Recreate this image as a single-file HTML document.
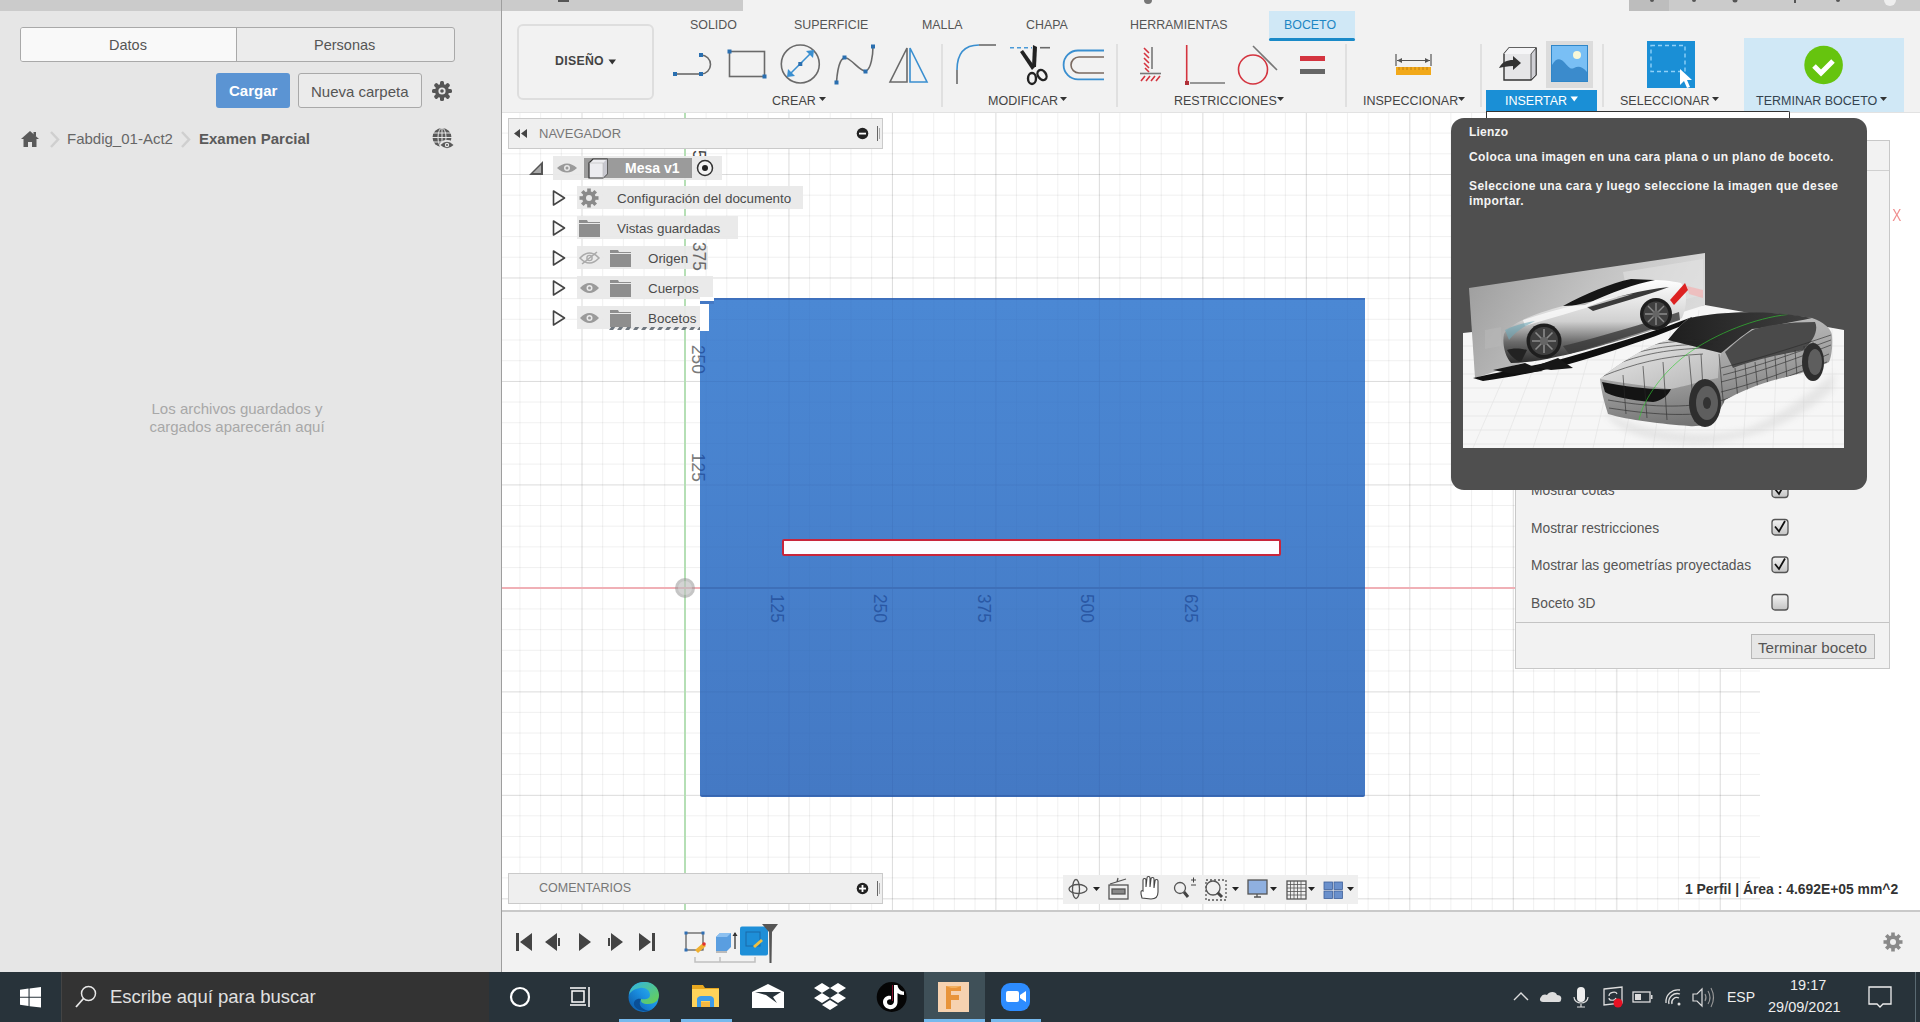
<!DOCTYPE html>
<html><head><meta charset="utf-8">
<style>
*{margin:0;padding:0;box-sizing:border-box}
html,body{width:1920px;height:1022px;overflow:hidden;background:#fff;font-family:"Liberation Sans",sans-serif}
.a{position:absolute}
.t{position:absolute;white-space:nowrap;line-height:1}
.tab{position:absolute;top:18px;font-size:13px;color:#555;white-space:nowrap;line-height:1}
.lbl{position:absolute;top:95px;font-size:12.5px;color:#444;white-space:nowrap;line-height:1}
.nv{position:absolute;font-size:13.4px;color:#4a4a4a;white-space:nowrap;line-height:1}
.rowbg{position:absolute;height:24px;background:rgba(232,232,232,0.93)}
svg{position:absolute;overflow:visible}
</style></head><body>
<!-- left panel -->
<div class="a" style="left:0;top:0;width:502px;height:972px;background:#e6e6e6"></div>
<div class="a" style="left:502px;top:0;width:1418px;height:11px;background:#f2f2f2"></div>
<div class="a" style="left:0;top:0;width:743px;height:11px;background:#cbcbcb"></div>
<div class="a" style="left:1629px;top:0;width:291px;height:11px;background:#cbcbcb"></div>
<div class="a" style="left:1629px;top:0;width:40px;height:11px;background:#bdbdbd"></div>
<svg style="left:0;top:0" width="1920" height="12">
 <g fill="#555"><rect x="558" y="0" width="11" height="2"/><circle cx="1652" cy="0" r="2"/><circle cx="1694" cy="0" r="2"/><circle cx="1735" cy="0" r="2.5"/><rect x="1794" y="0" width="2" height="3"/><circle cx="1838" cy="0" r="2"/></g>
 <circle cx="1890" cy="0" r="6" fill="#eee"/>
</svg>
<div class="a" style="left:501px;top:0;width:1px;height:972px;background:#9e9e9e"></div>

<div class="a" style="left:20px;top:27px;width:435px;height:35px;border:1px solid #a9a9a9;border-radius:3px;background:#ececec;overflow:hidden">
  <div class="a" style="left:0;top:0;width:216px;height:33px;background:#f9f9f9;border-right:1px solid #a9a9a9"></div>
</div>
<div class="t" style="left:109px;top:38px;font-size:14.5px;color:#555">Datos</div>
<div class="t" style="left:314px;top:38px;font-size:14.5px;color:#555">Personas</div>

<div class="a" style="left:216px;top:73px;width:74px;height:35px;background:#5b94d3;border-radius:3px"></div>
<div class="t" style="left:229px;top:83px;font-size:15px;font-weight:bold;color:#fff">Cargar</div>
<div class="a" style="left:298px;top:73px;width:124px;height:35px;border:1px solid #a9a9a9;border-radius:3px;background:#ebebeb"></div>
<div class="t" style="left:311px;top:84px;font-size:15px;color:#555">Nueva carpeta</div>
<!-- gear -->
<svg style="left:432px;top:81px" width="20" height="20" viewBox="0 0 20 20">
 <g fill="#555" transform="translate(10,10)">
  <circle r="7"/>
  <rect x="-2" y="-10" width="4" height="20" rx="1.5"/>
  <rect x="-2" y="-10" width="4" height="20" rx="1.5" transform="rotate(45)"/>
  <rect x="-2" y="-10" width="4" height="20" rx="1.5" transform="rotate(90)"/>
  <rect x="-2" y="-10" width="4" height="20" rx="1.5" transform="rotate(135)"/>
 </g>
 <circle cx="10" cy="10" r="3.6" fill="#e6e6e6"/>
 <circle cx="10" cy="10" r="1.8" fill="#555"/>
</svg>
<!-- breadcrumb -->
<svg style="left:21px;top:130px" width="18" height="18" viewBox="0 0 18 18">
 <path d="M9 1 L0 9 L2.5 9 L2.5 17 L7 17 L7 12 L11 12 L11 17 L15.5 17 L15.5 9 L18 9 Z" fill="#5a5a5a"/>
 <rect x="12.5" y="2" width="2.5" height="4" fill="#5a5a5a"/>
</svg>
<svg style="left:49px;top:131px" width="12" height="17" viewBox="0 0 12 17"><path d="M2 1 L9 8.5 L2 16" stroke="#cfcfcf" stroke-width="2.5" fill="none"/></svg>
<div class="t" style="left:67px;top:131px;font-size:15px;color:#666">Fabdig_01-Act2</div>
<svg style="left:180px;top:131px" width="12" height="17" viewBox="0 0 12 17"><path d="M2 1 L9 8.5 L2 16" stroke="#cfcfcf" stroke-width="2.5" fill="none"/></svg>
<div class="t" style="left:199px;top:131px;font-size:15px;font-weight:bold;color:#5a5a5a">Examen Parcial</div>
<!-- globe -->
<svg style="left:432px;top:128px" width="22" height="22" viewBox="0 0 22 22">
 <circle cx="10" cy="9.5" r="9.5" fill="#5a5a5a"/>
 <g stroke="#e6e6e6" stroke-width="1" fill="none">
  <line x1="0" y1="5" x2="20" y2="5"/><line x1="0" y1="9.5" x2="20" y2="9.5"/><line x1="0" y1="14" x2="20" y2="14"/>
  <ellipse cx="10" cy="9.5" rx="4" ry="9.5"/><line x1="10" y1="0" x2="10" y2="19"/>
 </g>
 <ellipse cx="15" cy="17" rx="7.5" ry="5" fill="#e6e6e6"/>
 <path d="M8.5 17 Q15 10.5 21.5 17 Q15 23.5 8.5 17 Z" fill="#5a5a5a"/>
 <circle cx="15" cy="17" r="2.2" fill="#e6e6e6"/><circle cx="15" cy="17" r="1" fill="#5a5a5a"/>
</svg>
<div class="t" style="left:0;top:400px;width:474px;text-align:center;font-size:15px;color:#a8a8a8;line-height:17.7px">Los archivos guardados y<br>cargados aparecerán aquí</div>
<!-- ribbon -->
<div class="a" style="left:502px;top:11px;width:1418px;height:101px;background:#f2f2f2"></div>
<div class="a" style="left:502px;top:112px;width:1418px;height:1px;background:#e2e2e2"></div>
<div class="a" style="left:1144px;top:0;width:8px;height:4px;background:#777;border-radius:0 0 4px 4px"></div>
<!-- tabs -->
<div class="a" style="left:1269px;top:11px;width:86px;height:30px;background:#d0e8f6"></div>
<div class="a" style="left:1269px;top:38px;width:86px;height:3px;background:#1a8ac8;border-radius:2px"></div>
<div class="tab" style="left:690px;top:19px;font-size:12.4px">SOLIDO</div>
<div class="tab" style="left:794px;top:19px;font-size:12.4px">SUPERFICIE</div>
<div class="tab" style="left:922px;top:19px;font-size:12.4px">MALLA</div>
<div class="tab" style="left:1026px;top:19px;font-size:12.4px">CHAPA</div>
<div class="tab" style="left:1130px;top:19px;font-size:12.4px">HERRAMIENTAS</div>
<div class="tab" style="left:1284px;top:19px;font-size:12.4px;color:#1d86c4">BOCETO</div>
<!-- diseño -->
<div class="a" style="left:517px;top:24px;width:137px;height:76px;border:2px solid #dedede;border-radius:6px"></div>
<div class="t" style="left:555px;top:55px;font-size:12.3px;font-weight:bold;color:#444;letter-spacing:0.3px">DISEÑO</div>
<svg style="left:608px;top:59px" width="9" height="6"><path d="M0.5 0.5 L8 0.5 L4.25 5.5 Z" fill="#333"/></svg>
<!-- separators -->
<div class="a" style="left:941px;top:44px;width:2px;height:63px;background:#e0e0e0"></div>
<div class="a" style="left:1116px;top:44px;width:2px;height:63px;background:#e0e0e0"></div>
<div class="a" style="left:1345px;top:44px;width:2px;height:63px;background:#e0e0e0"></div>
<div class="a" style="left:1480px;top:44px;width:2px;height:63px;background:#e0e0e0"></div>
<div class="a" style="left:1602px;top:44px;width:2px;height:63px;background:#e0e0e0"></div>
<!-- CREAR icons -->
<svg style="left:0;top:0" width="1920" height="113">
 <g fill="none" stroke="#6a6a6a" stroke-width="1.6">
  <line x1="675" y1="74" x2="701" y2="74"/>
  <path d="M701 55 A9.5 9.5 0 0 1 701 74"/>
  <rect x="729.5" y="51.5" width="35" height="25"/>
  <circle cx="800.3" cy="64" r="19"/>
  <path d="M836.5 82 C838 62 842 57 846 58 C852 59 860 72 866 71 C871 69 873 55 873 46"/>
  <path d="M907 48 L890 82 L907 82 Z"/>
 </g>
 <g fill="none" stroke="#3a8fd0" stroke-width="1.6">
  <path d="M910 48 L927 82 L910 82 Z"/>
  <line x1="789" y1="75" x2="812" y2="52"/>
 </g>
 <g fill="#3a8fd0"><path d="M787 77 L788 69 L795 76 Z"/><path d="M814 50 L813 58 L806 51 Z"/></g>
 <g fill="#2a6fb0">
  <rect x="673" y="72" width="4" height="4"/><rect x="699" y="72" width="4" height="4"/><rect x="699" y="53" width="4" height="4"/>
  <rect x="727.5" y="49.5" width="4" height="4"/><rect x="762.5" y="74.5" width="4" height="4"/>
  <rect x="798.3" y="62" width="4" height="4"/>
  <rect x="834.5" y="80.5" width="4" height="4"/><rect x="842.5" y="55.5" width="4" height="4"/><rect x="863.5" y="69.5" width="4" height="4"/><rect x="871" y="44.5" width="4" height="4"/>
 </g>
 <!-- MODIFICAR -->
 <path d="M957 84 L957 70" stroke="#6a6a6a" stroke-width="1.6" fill="none"/>
 <path d="M957 70 Q957 45 979 45" stroke="#3a8fd0" stroke-width="1.6" fill="none"/>
 <path d="M979 45 L996 45" stroke="#6a6a6a" stroke-width="1.6" fill="none"/>
 <path d="M1010 47.7 L1032 47.7" stroke="#4a9ad8" stroke-width="1.6" stroke-dasharray="4,3" fill="none"/>
 <path d="M1040 47.7 L1050 47.7" stroke="#6a6a6a" stroke-width="1.6" fill="none"/>
 <g fill="#222">
  <path d="M1020 52 L1023 50 L1035 67 L1032 70 Z"/>
  <path d="M1033 45 L1037 47 L1036 67 L1032 67 Z"/>
 </g>
 <g fill="none" stroke="#222" stroke-width="2.4">
  <ellipse cx="1032" cy="78.5" rx="4" ry="5.5"/>
  <ellipse cx="1042" cy="75" rx="4" ry="5.5" transform="rotate(-35 1042 75)"/>
 </g>
 <path d="M1104 50.5 L1078 50.5 A14.4 14.4 0 0 0 1078 79.3 L1104 79.3" stroke="#3a8fd0" stroke-width="1.8" fill="none"/>
 <path d="M1104 57 L1079 57 A8 8 0 0 0 1079 73 L1104 73" stroke="#7a6a60" stroke-width="1.6" fill="none"/>
 <!-- RESTRICCIONES -->
 <g stroke="#d4343f" stroke-width="1.6" fill="none">
  <path d="M1144 48 L1149 53 M1144 53 L1149 58 M1144 58 L1149 63 M1144 63 L1149 68 M1145 68 L1149 72"/>
  <path d="M1141 81 L1145 76 M1146 81 L1150 76 M1151 81 L1155 76 M1156 81 L1160 76"/>
  <line x1="1186.7" y1="45" x2="1186.7" y2="83"/>
  <circle cx="1253" cy="69.5" r="14.5"/>
 </g>
 <g stroke="#777" stroke-width="1.6" fill="none">
  <line x1="1152" y1="47" x2="1152" y2="69"/>
  <line x1="1140" y1="73.5" x2="1161" y2="73.5"/>
  <line x1="1190" y1="83" x2="1225" y2="83"/>
  <line x1="1253" y1="46" x2="1277" y2="70"/>
 </g>
 <rect x="1185" y="81" width="4" height="4" fill="#b03038"/>
 <rect x="1300" y="56" width="25" height="5" fill="#d4343f"/>
 <rect x="1300" y="69" width="25" height="5" fill="#666"/>
 <!-- INSPECCIONAR -->
 <g stroke="#555" stroke-width="1.2" fill="none">
  <line x1="1396" y1="54" x2="1396" y2="66"/><line x1="1431" y1="54" x2="1431" y2="66"/>
  <line x1="1397" y1="60.5" x2="1430" y2="60.5"/>
 </g>
 <path d="M1397 60.5 L1402 58 L1402 63 Z M1430 60.5 L1425 58 L1425 63 Z" fill="#555"/>
 <rect x="1396" y="67" width="35" height="8" fill="#f2a91a"/>
 <g stroke="#b57a10" stroke-width="0.8"><path d="M1399 67 v3 M1403 67 v3 M1407 67 v3 M1411 67 v3 M1415 67 v3 M1419 67 v3 M1423 67 v3 M1427 67 v3"/></g>
</svg>
<!-- INSERTAR -->
<svg style="left:1498px;top:46px" width="40" height="36" viewBox="0 0 40 36">
 <path d="M6 8 L11 2 L38 2 L38 29 L33 34 L6 34 Z" fill="#e6e6e8" stroke="#333" stroke-width="1.4"/>
 <path d="M11 2 L38 2 L33 8 L6 8 Z" fill="#f5f5f7"/>
 <path d="M33 8 L38 2 L38 29 L33 34 Z" fill="#cfcfd4" stroke="#333" stroke-width="0.8"/>
 <path d="M1 22 C4 16 9 14 15 14 L15 10 L23 17 L15 24 L15 20 C10 20 5 21 1 22 Z" fill="#333"/>
</svg>
<div class="a" style="left:1546px;top:41px;width:47px;height:47px;background:#dcdcdc"></div>
<svg style="left:1551px;top:45px" width="37" height="37" viewBox="0 0 37 37">
 <rect x="0" y="0" width="37" height="37" fill="#2f86c8"/>
 <rect x="1" y="1" width="35" height="35" fill="#79bff5"/>
 <circle cx="26" cy="10" r="4" fill="#f8f8d8"/>
 <path d="M1 36 L1 20 C5 13 9 13 13 17 C17 21 19 25 23 23 C27 21 31 21 36 27 L36 36 Z" fill="#3b8bcc"/>
</svg>
<div class="a" style="left:1486px;top:90px;width:111px;height:21px;background:#1a8fd6"></div>
<div class="lbl" style="left:1505px;color:#fff">INSERTAR</div>
<svg style="left:1570px;top:96px" width="9" height="6"><path d="M0.5 0.5 L8 0.5 L4.25 5.5 Z" fill="#fff"/></svg>
<!-- SELECCIONAR -->
<div class="a" style="left:1647px;top:41px;width:48px;height:47px;background:#1a8fd6"></div>
<svg style="left:1647px;top:41px" width="48" height="47">
 <rect x="4" y="4.5" width="34" height="26" fill="none" stroke="#8fd0f8" stroke-width="1.4" stroke-dasharray="4,3"/>
 <path d="M33 28 L33 44 L37 40 L40 47 L43 46 L40 39 L45 39 Z" fill="#fff"/>
</svg>
<!-- TERMINAR -->
<div class="a" style="left:1744px;top:38px;width:160px;height:74px;background:#d0e8f6"></div>
<svg style="left:1804px;top:45px" width="40" height="40">
 <circle cx="19.6" cy="20" r="19.3" fill="#66c40e"/>
 <path d="M10 21 L17 28 L29 16" stroke="#fff" stroke-width="5" fill="none"/>
</svg>
<!-- ribbon labels -->
<div class="lbl" style="left:772px">CREAR</div>
<div class="lbl" style="left:988px">MODIFICAR</div>
<div class="lbl" style="left:1174px">RESTRICCIONES</div>
<div class="lbl" style="left:1363px">INSPECCIONAR</div>
<div class="lbl" style="left:1620px">SELECCIONAR</div>
<div class="lbl" style="left:1756px;color:#33434f">TERMINAR BOCETO</div>
<svg style="left:0;top:96px" width="1920" height="8">
 <path d="M819 1 L826 1 L822.5 5 Z M1060 1 L1067 1 L1063.5 5 Z M1277 1 L1284 1 L1280.5 5 Z M1458 1 L1465 1 L1461.5 5 Z M1712 1 L1719 1 L1715.5 5 Z M1880 1 L1887 1 L1883.5 5 Z" fill="#333"/>
</svg>
<!-- viewport -->
<div class="a" style="left:502px;top:113px;width:1418px;height:797px;background:#fff"></div>
<div class="a" style="left:502px;top:113px;width:1258px;height:797px;
background-image:
linear-gradient(to right, rgba(0,0,0,0.085) 1px, transparent 1px),
linear-gradient(to bottom, rgba(0,0,0,0.085) 1px, transparent 1px),
linear-gradient(to right, rgba(0,0,0,0.06) 1px, transparent 1px),
linear-gradient(to bottom, rgba(0,0,0,0.06) 1px, transparent 1px);
background-size:103.5px 103.5px,103.5px 103.5px,20.7px 20.7px,20.7px 20.7px;
background-position:79.5px 61px,79.5px 61px,79.5px 61px,79.5px 61px"></div>
<!-- axes -->
<div class="a" style="left:684px;top:113px;width:2px;height:797px;background:#b5dfb5"></div>
<!-- blue rect -->
<div class="a" style="left:700px;top:298px;width:665px;height:499px;background:linear-gradient(#4b88d4,#4479c4);border-top:2px solid #3f72bf;border-bottom:2px solid #3a6bb6;border-radius:0 0 2px 2px"></div>
<div class="a" style="left:700px;top:298px;width:665px;height:499px;opacity:0.12;
background-image:
linear-gradient(to right, rgba(0,0,60,0.35) 1px, transparent 1px),
linear-gradient(to bottom, rgba(0,0,60,0.35) 1px, transparent 1px),
linear-gradient(to right, rgba(0,0,60,0.15) 1px, transparent 1px),
linear-gradient(to bottom, rgba(0,0,60,0.15) 1px, transparent 1px);
background-size:103.5px 103.5px,103.5px 103.5px,20.7px 20.7px,20.7px 20.7px;
background-position:-15px 83px,-15px 83px,-15px 83px,-15px 83px"></div>
<div class="a" style="left:502px;top:587px;width:198px;height:2px;background:#f0b0b6"></div>
<div class="a" style="left:700px;top:587px;width:665px;height:2px;background:#3e6fb8"></div>
<div class="a" style="left:1365px;top:587px;width:151px;height:2px;background:#f0b0b6"></div>
<!-- origin -->
<svg style="left:673px;top:576px" width="24" height="24"><circle cx="12" cy="12" r="10" fill="rgba(150,150,150,0.55)"/><circle cx="12" cy="12" r="7" fill="rgba(255,255,255,0.25)"/></svg>
<!-- red bar -->
<div class="a" style="left:782px;top:539px;width:499px;height:17px;background:#fdfdff;border:2px solid #c8263c;border-radius:2px"></div>
<!-- axis numbers -->
<div class="t" style="left:786px;top:594px;font-size:18px;color:#2a58a4;transform-origin:0 0;transform:rotate(90deg) scaleX(0.96)">125</div>
<div class="t" style="left:889px;top:594px;font-size:18px;color:#2a58a4;transform-origin:0 0;transform:rotate(90deg) scaleX(0.96)">250</div>
<div class="t" style="left:993px;top:594px;font-size:18px;color:#2a58a4;transform-origin:0 0;transform:rotate(90deg) scaleX(0.96)">375</div>
<div class="t" style="left:1096px;top:594px;font-size:18px;color:#2a58a4;transform-origin:0 0;transform:rotate(90deg) scaleX(0.96)">500</div>
<div class="t" style="left:1200px;top:594px;font-size:18px;color:#2a58a4;transform-origin:0 0;transform:rotate(90deg) scaleX(0.96)">625</div>
<div class="a" style="left:680px;top:340px;width:20px;height:145px;overflow:hidden">
<div class="t" style="left:27px;top:5px;font-size:18px;color:#7a7a7a;transform-origin:0 0;transform:rotate(90deg) scaleX(0.96)">250</div>
<div class="t" style="left:27px;top:113px;font-size:18px;color:#7a7a7a;transform-origin:0 0;transform:rotate(90deg) scaleX(0.96)">125</div>
</div>
<div class="a" style="left:700px;top:340px;width:20px;height:145px;overflow:hidden">
<div class="t" style="left:7px;top:5px;font-size:18px;color:#2a58a4;transform-origin:0 0;transform:rotate(90deg) scaleX(0.96)">250</div>
<div class="t" style="left:7px;top:113px;font-size:18px;color:#2a58a4;transform-origin:0 0;transform:rotate(90deg) scaleX(0.96)">125</div>
</div>
<!-- navigator -->
<div class="a" style="left:508px;top:118px;width:375px;height:31px;background:#efefef;border:1px solid #cacaca"></div>
<svg style="left:514px;top:129px" width="14" height="9"><path d="M6 0 L0 4.5 L6 9 Z M13 0 L7 4.5 L13 9 Z" fill="#444"/></svg>
<div class="t" style="left:539px;top:127px;font-size:13px;color:#777">NAVEGADOR</div>
<svg style="left:856px;top:127px" width="13" height="13"><circle cx="6.5" cy="6.5" r="5.8" fill="#222"/><rect x="3" y="5.7" width="7" height="1.8" fill="#fff"/></svg>
<div class="a" style="left:877px;top:126px;width:1px;height:15px;background:#666"></div>
<div class="a" style="left:879px;top:128px;width:1px;height:11px;background:#aaa"></div>
<!-- tree -->
<div class="rowbg" style="left:553px;top:156px;width:169px;height:24px"></div>
<svg style="left:528px;top:160px" width="16" height="16"><path d="M15 1 L15 15 L1 15 Z" fill="#555"/><path d="M13 5 L13 13 L5 13 Z" fill="#aaa"/></svg>
<svg style="left:557px;top:162px" width="20" height="12"><path d="M0 6 Q10 -3 20 6 Q10 15 0 6 Z" fill="#9a9a9a"/><circle cx="10" cy="6" r="3" fill="#e8e8e8"/><circle cx="10" cy="6" r="1.5" fill="#9a9a9a"/></svg>
<div class="a" style="left:584px;top:158px;width:108px;height:20px;background:#9b9b9b"></div>
<svg style="left:587px;top:158px" width="22" height="21"><path d="M2 5 L6 1 L20 1 L20 16 L16 20 L2 20 Z" fill="#ececf0" stroke="#333" stroke-width="1.2"/><path d="M16 5 L20 1 L20 16 L16 20 Z" fill="#c8c8d0"/><path d="M2 5 L16 5 L16 20" fill="none" stroke="#bbb" stroke-width="0.6"/></svg>
<div class="t" style="left:625px;top:161px;font-size:14px;font-weight:bold;color:#fff">Mesa v1</div>
<svg style="left:696px;top:159px" width="18" height="18"><circle cx="9" cy="9" r="7.5" fill="#f4f4f4" stroke="#333" stroke-width="1.5"/><circle cx="9" cy="9" r="3" fill="#222"/></svg>
<div class="a" style="left:686px;top:140px;width:24px;height:16px;overflow:hidden"><div class="t" style="left:22px;top:10px;font-size:18px;color:#444;transform-origin:0 0;transform:rotate(90deg) scaleX(0.96)">5</div></div>

<div class="rowbg" style="left:577px;top:186px;width:226px;height:23px"></div>
<div class="rowbg" style="left:577px;top:216px;width:161px;height:23px"></div>
<div class="rowbg" style="left:577px;top:246px;width:131px;height:23px"></div>
<div class="rowbg" style="left:577px;top:276px;width:136px;height:23px"></div>
<div class="rowbg" style="left:577px;top:306px;width:131px;height:23px"></div>
<svg style="left:552px;top:190px" width="14" height="140">
 <g fill="#fafafa" stroke="#444" stroke-width="1.6" stroke-linejoin="round">
  <path d="M1.5 1 L12.5 8 L1.5 15 Z"/>
  <path d="M1.5 31 L12.5 38 L1.5 45 Z"/>
  <path d="M1.5 61 L12.5 68 L1.5 75 Z"/>
  <path d="M1.5 91 L12.5 98 L1.5 105 Z"/>
  <path d="M1.5 121 L12.5 128 L1.5 135 Z"/>
 </g>
</svg>
<!-- config gear -->
<svg style="left:579px;top:188px" width="20" height="20" viewBox="0 0 20 20">
 <g fill="#8a8a8a" transform="translate(10,10)">
  <circle r="6.8"/>
  <rect x="-1.8" y="-9.5" width="3.6" height="19"/>
  <rect x="-1.8" y="-9.5" width="3.6" height="19" transform="rotate(45)"/>
  <rect x="-1.8" y="-9.5" width="3.6" height="19" transform="rotate(90)"/>
  <rect x="-1.8" y="-9.5" width="3.6" height="19" transform="rotate(135)"/>
 </g>
 <circle cx="10" cy="10" r="3" fill="#e9e9e9"/>
</svg>
<div class="nv" style="left:617px;top:192px">Configuración del documento</div>
<svg style="left:579px;top:220px" width="21" height="17"><path d="M0 0 L8 0 L9 2 L21 2 L21 17 L0 17 Z" fill="#8e8e8e"/><rect x="0" y="3" width="21" height="1" fill="#e9e9e9"/></svg>
<div class="nv" style="left:617px;top:222px">Vistas guardadas</div>
<!-- origen -->
<svg style="left:579px;top:251px" width="21" height="14"><path d="M1 7 Q10.5 -3 20 7 Q10.5 17 1 7 Z" fill="none" stroke="#aaa" stroke-width="1.5"/><circle cx="10.5" cy="7" r="2.6" fill="none" stroke="#aaa" stroke-width="1.4"/><line x1="3" y1="13" x2="18" y2="1" stroke="#aaa" stroke-width="1.5"/></svg>
<svg style="left:610px;top:250px" width="21" height="17"><path d="M0 0 L8 0 L9 2 L21 2 L21 17 L0 17 Z" fill="#8e8e8e"/><rect x="0" y="3" width="21" height="1" fill="#e9e9e9"/></svg>
<div class="nv" style="left:648px;top:252px">Origen</div>
<div class="t" style="left:708px;top:242px;font-size:18px;color:#6a6a6a;transform-origin:0 0;transform:rotate(90deg) scaleX(0.96)">375</div>
<!-- cuerpos -->
<svg style="left:579px;top:281px" width="21" height="14"><path d="M1 7 Q10.5 -3 20 7 Q10.5 17 1 7 Z" fill="#9a9a9a"/><circle cx="10.5" cy="7" r="3" fill="#e9e9e9"/><circle cx="10.5" cy="7" r="1.5" fill="#9a9a9a"/></svg>
<svg style="left:610px;top:280px" width="21" height="17"><path d="M0 0 L8 0 L9 2 L21 2 L21 17 L0 17 Z" fill="#8e8e8e"/><rect x="0" y="3" width="21" height="1" fill="#e9e9e9"/></svg>
<div class="nv" style="left:648px;top:282px">Cuerpos</div>
<!-- bocetos -->
<svg style="left:579px;top:311px" width="21" height="14"><path d="M1 7 Q10.5 -3 20 7 Q10.5 17 1 7 Z" fill="#9a9a9a"/><circle cx="10.5" cy="7" r="3" fill="#e9e9e9"/><circle cx="10.5" cy="7" r="1.5" fill="#9a9a9a"/></svg>
<svg style="left:610px;top:310px" width="21" height="17"><path d="M0 0 L8 0 L9 2 L21 2 L21 17 L0 17 Z" fill="#8e8e8e"/><rect x="0" y="3" width="21" height="1" fill="#e9e9e9"/></svg>
<div class="nv" style="left:648px;top:312px">Bocetos</div>
<svg style="left:608px;top:323px" width="102" height="8"><path d="M6 5.5 L102 5.5" stroke="#707880" stroke-width="3" stroke-dasharray="4,4" transform="skewX(-35)"/></svg>
<!-- white notch on blue rect corner -->
<div class="a" style="left:700px;top:297px;width:14px;height:4px;background:#fff"></div>
<div class="a" style="left:700px;top:301px;width:14px;height:3px;background:#4479c4"></div>
<div class="a" style="left:700px;top:304px;width:9px;height:27px;background:#fff"></div>
<!-- comments -->
<div class="a" style="left:508px;top:873px;width:375px;height:31px;background:#efefef;border:1px solid #cacaca"></div>
<div class="t" style="left:539px;top:882px;font-size:12.5px;color:#777">COMENTARIOS</div>
<svg style="left:856px;top:882px" width="13" height="13"><circle cx="6.5" cy="6.5" r="5.8" fill="#222"/><rect x="3" y="5.7" width="7" height="1.8" fill="#fff"/><rect x="5.6" y="3" width="1.8" height="7" fill="#fff"/></svg>
<div class="a" style="left:877px;top:881px;width:1px;height:15px;background:#666"></div>
<div class="a" style="left:879px;top:883px;width:1px;height:11px;background:#aaa"></div>

<!-- nav toolbar -->
<div class="a" style="left:1063px;top:875px;width:295px;height:29px;background:#efefef"></div>
<svg style="left:0;top:870px" width="1920" height="40">
 <g fill="none" stroke="#555" stroke-width="1.3">
  <ellipse cx="1078" cy="19" rx="9" ry="4.5"/>
  <ellipse cx="1076" cy="19" rx="3.5" ry="9.5"/>
  <rect x="1109" y="15" width="19" height="14"/>
  <rect x="1112" y="19" width="13" height="5" fill="#888"/>
  <path d="M1110 14 L1126 9 M1117 12 L1118 8"/>
  <circle cx="1180" cy="18" r="5.5"/>
  <circle cx="1213" cy="18" r="7"/>
  <rect x="1206" y="10" width="20" height="20" stroke-dasharray="2,2"/>
  <rect x="1248" y="10" width="19" height="14" fill="#8fb0e0"/>
  <path d="M1254 27 L1261 27 M1257 24 L1257 27"/>
  <rect x="1287" y="11" width="19" height="18"/>
  <path d="M1287 14.5 H1306 M1287 18 H1306 M1287 21.5 H1306 M1287 25 H1306 M1290.5 11 V29 M1294 11 V29 M1297.5 11 V29 M1301 11 V29" stroke-width="0.8"/>
 </g>
 <path d="M1142 28 C1140 22 1141 20 1143 21 L1143 10 C1143 8 1146 8 1146 10 L1146 17 L1147 8 C1147 6 1150 6 1150 8 L1150 17 L1151 9 C1151 7 1154 7 1154 9 L1154 18 L1155 11 C1155 9 1158 9 1158 11 L1158 22 C1158 27 1155 29 1151 29 Z" fill="#fff" stroke="#444" stroke-width="1.1"/>
 <path d="M1184 22 L1188 27 M1217.5 22.5 L1222 27" stroke="#444" stroke-width="3"/>
 <path d="M1191 10 h5 M1193.5 7.5 v5 M1191 15 h5" stroke="#444" stroke-width="1"/>
 <g fill="#6a90cc" stroke="#3e5f9a" stroke-width="0.8"><rect x="1324" y="12" width="8.5" height="7.5"/><rect x="1334" y="12" width="8.5" height="7.5"/><rect x="1324" y="21" width="8.5" height="7.5"/><rect x="1334" y="21" width="8.5" height="7.5"/></g>
 <path d="M1093 17 h7 l-3.5 4 z M1232 17 h7 l-3.5 4 z M1270 17 h7 l-3.5 4 z M1308 17 h7 l-3.5 4 z M1347 17 h7 l-3.5 4 z" fill="#222"/>
</svg>
<div class="t" style="left:1685px;top:883px;font-size:13.9px;font-weight:bold;color:#333">1 Perfil | Área : 4.692E+05 mm^2</div>
<!-- right panel -->
<div class="a" style="left:1515px;top:140px;width:375px;height:529px;background:#f2f2f2;border:1px solid #c8c8c8"></div>
<div class="a" style="left:1516px;top:170px;width:373px;height:1px;background:#d0d0d0"></div>
<div class="t" style="left:1891px;top:207px;font-size:17px;color:#f09090;transform:scaleX(0.8)">X</div>
<div class="t" style="left:1531px;top:484px;font-size:13.8px;color:#555">Mostrar cotas</div>
<div class="t" style="left:1531px;top:522px;font-size:13.8px;color:#555">Mostrar restricciones</div>
<div class="t" style="left:1531px;top:559px;font-size:13.8px;color:#555">Mostrar las geometrías proyectadas</div>
<div class="t" style="left:1531px;top:597px;font-size:13.8px;color:#555">Boceto 3D</div>
<svg style="left:1770px;top:480px" width="22" height="135">
 <defs><linearGradient id="cb" x1="0" y1="0" x2="0" y2="1"><stop offset="0" stop-color="#f4f4f4"/><stop offset="1" stop-color="#c4c4c4"/></linearGradient></defs>
 <g fill="url(#cb)" stroke="#555" stroke-width="1.3">
  <rect x="2" y="2" width="16" height="15.5" rx="3"/>
  <rect x="2" y="39.5" width="16" height="15.5" rx="3"/>
  <rect x="2" y="77" width="16" height="15.5" rx="3"/>
  <rect x="2" y="114.5" width="16" height="15.5" rx="3"/>
 </g>
 <g fill="none" stroke="#111" stroke-width="1.8">
  <path d="M5 9 L9 14 L15 3"/>
  <path d="M5 46.5 L9 51.5 L15 41"/>
  <path d="M5 84 L9 89 L15 78.5"/>
 </g>
</svg>
<div class="a" style="left:1516px;top:622px;width:373px;height:1px;background:#c4c4c4"></div>
<div class="a" style="left:1751px;top:634px;width:124px;height:25px;background:#e6e6e6;border:1px solid #b8b8b8"></div>
<div class="t" style="left:1758px;top:640px;font-size:15.2px;color:#555">Terminar boceto</div>

<!-- dropdown under insertar -->
<div class="a" style="left:1486px;top:111px;width:304px;height:12px;background:#fff;border:1px solid #333;border-bottom:none;border-radius:0 2px 0 0"></div>

<!-- tooltip -->
<div class="a" style="left:1451px;top:118px;width:416px;height:372px;background:#4f4f4f;border-radius:13px"></div>
<div class="t" style="left:1469px;top:126px;font-size:12px;font-weight:bold;color:#f4f4f4;letter-spacing:0.2px">Lienzo</div>
<div class="t" style="left:1469px;top:151px;font-size:12px;font-weight:bold;color:#f4f4f4;letter-spacing:0.4px">Coloca una imagen en una cara plana o un plano de boceto.</div>
<div class="t" style="left:1469px;top:179px;font-size:12px;font-weight:bold;color:#f4f4f4;line-height:15px;letter-spacing:0.4px">Seleccione una cara y luego seleccione la imagen que desee<br>importar.</div>
<!-- car image -->
<svg style="left:1463px;top:250px" width="382" height="199" viewBox="0 0 382 199">
 <defs>
  <linearGradient id="board" x1="0" y1="0" x2="1" y2="0.3"><stop offset="0" stop-color="#9a9a9a"/><stop offset="0.55" stop-color="#c2c2c2"/><stop offset="1" stop-color="#dadada"/></linearGradient>
  <linearGradient id="car1" x1="0" y1="0" x2="0" y2="1"><stop offset="0" stop-color="#ffffff"/><stop offset="0.5" stop-color="#d0d0d0"/><stop offset="0.75" stop-color="#6a6a6a"/><stop offset="1" stop-color="#2a2a2a"/></linearGradient>
  <linearGradient id="body2" x1="0" y1="0" x2="0.3" y2="1"><stop offset="0" stop-color="#cfcfcf"/><stop offset="0.6" stop-color="#a0a0a0"/><stop offset="1" stop-color="#747474"/></linearGradient>
  <linearGradient id="hood2" x1="0" y1="0" x2="1" y2="1"><stop offset="0" stop-color="#ececec"/><stop offset="1" stop-color="#b4b4b4"/></linearGradient>
  <filter id="blr" x="-20%" y="-20%" width="140%" height="140%"><feGaussianBlur stdDeviation="3"/></filter>
  <clipPath id="bclip"><path d="M137 129 C160 110 185 96 205 90 C215 78 222 70 227 68 C250 62 300 60 349 68 C360 72 368 78 369 85 C370 98 368 108 366 112 C350 120 335 124 331 125 C300 132 280 140 262 150 C255 165 245 178 226 176 C200 174 165 170 145 164 C141 152 138 140 137 129 Z"/></clipPath>
  <linearGradient id="roof2" x1="0" y1="0" x2="1" y2="0"><stop offset="0" stop-color="#1e1e1e"/><stop offset="1" stop-color="#404040"/></linearGradient>
 </defs>
 <!-- floor -->
 <path d="M0 83 L120 70 L242 55 L381 80 L381 198 L0 198 Z" fill="#f6f6f6"/>
 <g stroke="#e0e0e0" stroke-width="0.6">
  <path d="M0 96 L381 96 M0 110 L381 110 M0 124 L381 124 M0 138 L381 138 M0 152 L381 152 M0 166 L381 166 M0 180 L381 180 M0 194 L381 194"/>
  <path d="M10 198 L60 83 M40 198 L85 80 M70 198 L110 77 M100 198 L135 73 M130 198 L160 70 M160 198 L185 67 M190 198 L210 64 M220 198 L236 60 M250 198 L262 62 M280 198 L288 66 M310 198 L315 70 M340 198 L342 74 M370 198 L369 78"/>
 </g>
 <!-- board -->
 <path d="M6 38 L242 3 L242 55 L12 128 Z" fill="url(#board)"/>
 <path d="M160 22 L240 9 L240 45 L168 62 Z" fill="#e4e4e4" opacity="0.55"/>
 <path d="M22 80 L38 77 L38 96 L22 99 Z" fill="#b8b8b8" opacity="0.6"/>
 <!-- sketch car shadows -->
 <path d="M10 128 C40 121 70 116 95 110 C130 100 170 88 205 76 L229 67 L228 72 C200 84 160 98 120 110 C90 119 50 127 20 131 Z" fill="#101010"/>
 <path d="M30 120 L62 113 L80 121 L50 124 Z M70 117 L95 108 L110 118 L88 120 Z" fill="#161616"/>
 <!-- sketch car body -->
 <path d="M41 84 C46 74 70 64 100 56 C125 46 150 35 168 30 C188 29 206 30 218 33 C225 42 224 56 219 68 C200 78 165 88 130 98 C100 106 70 113 48 113 C42 106 39 94 41 84 Z" fill="url(#car1)"/>
 <path d="M100 56 C122 44 148 33 168 29 L192 30 C172 34 148 42 122 55 Z" fill="#161616"/>
 <path d="M124 57 C150 47 178 40 206 37 C185 45 155 53 130 61 Z" fill="#3a3a3a"/>
 <path d="M100 96 C140 86 180 74 216 62 L217 70 C180 82 140 94 106 104 Z" fill="#3a3a3a" opacity="0.8"/>
 <path d="M60 70 C90 60 130 50 170 44 C130 56 95 66 62 76 Z" fill="#ffffff" opacity="0.7"/>
 <path d="M44 100 C48 106 52 110 58 112 L64 100 C56 98 50 98 44 100 Z" fill="#222"/>
 <circle cx="81" cy="91" r="17.5" fill="#1e1e1e"/><circle cx="81" cy="91" r="14" fill="#404040"/>
 <g stroke="#8a8a8a" stroke-width="1.6"><path d="M81 79 V103 M69 91 H93 M72.5 82.5 L89.5 99.5 M89.5 82.5 L72.5 99.5"/></g>
 <circle cx="81" cy="91" r="4" fill="#666"/>
 <circle cx="193" cy="64" r="16" fill="#1e1e1e"/><circle cx="193" cy="64" r="12.5" fill="#404040"/>
 <g stroke="#8a8a8a" stroke-width="1.4"><path d="M193 53 V75 M182 64 H204 M185 56 L201 72 M201 56 L185 72"/></g>
 <circle cx="193" cy="64" r="3.5" fill="#666"/>
 <path d="M42 80 C50 76 60 73 72 71 C62 76 52 82 46 90 Z" fill="#6fa8b8" opacity="0.6"/>
 <path d="M207 50 L222 33 L225 40 L211 55 Z" fill="#d22"/>
 <path d="M224 36 L240 40 L240 48 L226 44 Z" fill="#f99" opacity="0.45"/>
 <!-- wireframe car shadow -->
 <path d="M140 160 C170 178 230 190 280 180 C320 165 350 140 372 122 L370 140 C340 165 300 192 230 194 C180 192 150 180 140 160 Z" fill="#c8c8c8" opacity="0.35" filter="url(#blr)"/>
 <!-- wireframe car body -->
 <path d="M137 129 C160 110 185 96 205 90 C215 78 222 70 227 68 C250 62 300 60 349 68 C360 72 368 78 369 85 C370 98 368 108 366 112 C350 120 335 124 331 125 C300 132 280 140 262 150 C255 165 245 178 226 176 C200 174 165 170 145 164 C141 152 138 140 137 129 Z" fill="url(#body2)"/>
 <path d="M137 129 C160 110 185 96 205 90 L258 103 C256 112 255 120 255 128 C235 132 215 138 207 139 C180 136 155 132 137 129 Z" fill="url(#hood2)"/>
 <path d="M205 90 C214 79 221 71 227 68 C255 62 300 59 349 68 C330 72 300 78 289 79 C280 85 268 95 258 103 Z" fill="url(#roof2)"/>
 <path d="M262 102 C275 90 285 82 292 79 C310 74 330 72 352 72 C356 80 350 92 340 100 C320 104 290 110 270 118 Z" fill="#4a4a4a"/>
 <path d="M139 132 C165 137 190 140 208 139 C205 146 198 151 190 152 C165 150 148 146 142 142 Z" fill="#141414"/>
 <g stroke="#2a2a2a" stroke-width="0.7" fill="none" opacity="0.85" clip-path="url(#bclip)">
  <path d="M140 126 C170 114 200 106 240 104 M144 118 C172 106 200 99 245 98 M150 110 C178 100 205 94 250 94 M160 102 C185 94 210 90 255 90"/>
  <path d="M145 150 C180 156 220 160 260 150 C290 140 320 128 364 112 M146 158 C185 164 225 168 262 160 M258 132 C290 124 330 110 368 95 M258 118 C290 110 330 98 368 85 M258 142 C290 134 330 120 366 104 M260 125 C295 116 330 104 368 90"/>
  <path d="M226 106 L232 172 M238 104 L242 174 M256 104 L262 172 M272 118 L275 150 M282 114 L285 146 M292 112 L295 142 M302 108 L305 138 M312 106 L314 134 M322 103 L324 130 M332 100 L334 126 M341 96 L343 123 M350 92 L352 120 M180 116 L184 168 M160 125 L163 164 M200 112 L204 170"/>
 </g>
 <path d="M176 170 C180 150 200 120 230 100 C260 80 300 66 330 64" stroke="#3c3" stroke-width="0.8" fill="none" opacity="0.8" clip-path="url(#bclip)"/>
 <ellipse cx="242" cy="153" rx="16" ry="24" fill="#2e2e2e"/><ellipse cx="244" cy="153" rx="11" ry="17" fill="#5e5e5e"/><ellipse cx="244" cy="153" rx="4" ry="6" fill="#333"/>
 <ellipse cx="350" cy="112" rx="11" ry="19" fill="#2e2e2e"/><ellipse cx="352" cy="112" rx="7" ry="13" fill="#5e5e5e"/>
</svg>

<!-- timeline -->
<div class="a" style="left:502px;top:910px;width:1418px;height:2px;background:#c9c9c9"></div>
<div class="a" style="left:502px;top:912px;width:1418px;height:60px;background:#f2f2f2"></div>
<svg style="left:505px;top:925px" width="290" height="40">
 <g fill="#444">
  <rect x="11" y="8" width="3" height="18"/><path d="M27 8 L15 17 L27 26 Z"/>
  <path d="M52 8 L40 17 L52 26 Z"/><rect x="53" y="13" width="2" height="8"/>
  <path d="M74 8 L86 17 L74 26 Z"/>
  <rect x="103" y="13" width="2" height="8"/><path d="M106 8 L118 17 L106 26 Z"/>
  <path d="M134 8 L146 17 L134 26 Z"/><rect x="147" y="8" width="3" height="18"/>
 </g>
 <rect x="181" y="8" width="17" height="17" fill="none" stroke="#555" stroke-width="1.2"/>
 <g fill="#2f6fb5"><rect x="179.5" y="6.5" width="3" height="3"/><rect x="196.5" y="6.5" width="3" height="3"/><rect x="179.5" y="23.5" width="3" height="3"/></g>
 <path d="M190 25 L198 18 L201 21 L193 28 Z" fill="#f0b030"/>
 <circle cx="199" cy="19" r="1.8" fill="#e03030"/>
 <path d="M211 12 L215 8 L226 8 L226 22 L222 26 L211 26 Z" fill="#5a9ee0"/>
 <path d="M215 8 L226 8 L222 12 L211 12 Z" fill="#8cc0f0"/>
 <path d="M211 26 L222 26 L222 28 L211 28 Z" fill="#bbb"/>
 <path d="M230 8 V24" stroke="#333" stroke-width="1.3"/><path d="M227.5 11 L230 7 L232.5 11 Z" fill="#333"/>
 <rect x="235" y="1.5" width="28" height="29" rx="2" fill="#1e8fd8"/>
 <rect x="241" y="7" width="14" height="14" fill="none" stroke="#1a6aa8" stroke-width="1"/>
 <path d="M248 21 L256 14 L258 16 L250 23 Z" fill="#f0c040"/>
 <path d="M257 -1 L273 -1 L267 7 L266.5 38 L264.5 38 L264 7 Z" fill="#555"/>
 <path d="M190 32 V37 H250 V32 M215 32 V37" stroke="#c0c0c0" stroke-width="1.5" fill="none"/>
</svg>
<svg style="left:1883px;top:932px" width="20" height="20" viewBox="0 0 20 20">
 <g fill="#8a8a8a" transform="translate(10,10)">
  <circle r="6.8"/>
  <rect x="-1.8" y="-9.5" width="3.6" height="19"/>
  <rect x="-1.8" y="-9.5" width="3.6" height="19" transform="rotate(45)"/>
  <rect x="-1.8" y="-9.5" width="3.6" height="19" transform="rotate(90)"/>
  <rect x="-1.8" y="-9.5" width="3.6" height="19" transform="rotate(135)"/>
 </g>
 <circle cx="10" cy="10" r="3" fill="#f0f0f0"/>
</svg>
<!-- taskbar -->
<div class="a" style="left:0;top:972px;width:1920px;height:50px;background:#28333a"></div>
<svg style="left:20px;top:987px" width="21" height="21"><path d="M0 2.8 L8.5 1.6 L8.5 9.7 L0 9.7 Z M9.6 1.4 L21 0 L21 9.7 L9.6 9.7 Z M0 10.8 L8.5 10.8 L8.5 19 L0 17.8 Z M9.6 10.8 L21 10.8 L21 20.6 L9.6 19.2 Z" fill="#fff"/></svg>
<div class="a" style="left:61px;top:972px;width:428px;height:50px;background:#333333;border-left:1px solid #444"></div>
<svg style="left:75px;top:985px" width="22" height="24"><circle cx="13.5" cy="8.5" r="7" fill="none" stroke="#e8e8e8" stroke-width="1.5"/><line x1="8.5" y1="13.5" x2="1" y2="22" stroke="#e8e8e8" stroke-width="1.8"/></svg>
<div class="t" style="left:110px;top:988px;font-size:18.5px;color:#e0e0e0">Escribe aquí para buscar</div>
<svg style="left:0;top:972px" width="1920" height="50">
 <circle cx="520" cy="25" r="9" fill="none" stroke="#fff" stroke-width="2.2"/>
 <g stroke="#fff" stroke-width="1.5" fill="none"><rect x="572" y="19" width="12" height="11"/><path d="M570 16 H586 M570 33 H586 M589 15 V35"/></g>
 <defs><linearGradient id="edg" x1="0" y1="1" x2="1" y2="0"><stop offset="0" stop-color="#0b53a0"/><stop offset="0.5" stop-color="#1a8ee0"/><stop offset="1" stop-color="#35c1f1"/></linearGradient>
 <linearGradient id="edg2" x1="0" y1="0" x2="1" y2="1"><stop offset="0" stop-color="#2fb3e8"/><stop offset="1" stop-color="#6bd24a"/></linearGradient></defs>
 <circle cx="643.5" cy="25" r="15" fill="url(#edg)"/>
 <path d="M629 23 C630 13 638 10 645 10 C653 10 659 16 659 23 C659 29 654 32 648 32 C643 32 640 30 641 27 C645 28 650 27 650 23 C650 18 645 15 640 16 C634 17 630 20 629 23 Z" fill="url(#edg2)"/>
 <path d="M641 27 C637 26 633 29 634 33 C636 38 643 40 650 39 C643 38 637 34 641 27 Z" fill="#0a4f96"/>
 <path d="M692 13 L703 13 L705 16 L719 16 L719 35 L692 35 Z" fill="#e8a820"/>
 <path d="M692 17 L719 17 L719 35 L692 35 Z" fill="#ffd35a"/>
 <path d="M697 35 L697 28 C697 25 699 24 702 24 L709 24 C712 24 714 25 714 28 L714 35 L710 35 L710 29 L701 29 L701 35 Z" fill="#3d9be8"/>
 <rect x="701" y="30" width="9" height="5" fill="#f5b840"/>
 <path d="M752 36 L752 20 L768 12 L784 20 L784 36 Z" fill="#fff"/>
 <path d="M755 20 L781 20 L773 25 L777 31 L766 23 Z" fill="#28333a"/>
 <g fill="#fff"><path d="M822 11 L830 16 L822 21 L814 16 Z M838 11 L846 16 L838 21 L830 16 Z M822 21 L830 26 L822 31 L814 26 Z M838 21 L846 26 L838 31 L830 26 Z M830 28 L838 33 L830 38 L822 33 Z"/></g>
 <circle cx="891.7" cy="25" r="15" fill="#050505"/>
 <path d="M894 13 L897.5 13 C898 17 901 19.5 904 19.5 L904 23 C901 23 899 22 897.5 21 L897.5 30 C897.5 35 893 38 889 37 C885 36 883 33 883 30 C883 26 887 23 891 24 L891 27.5 C889 27 887 28 887 30 C887 32 889 33.5 891 33 C893 32.5 894 31 894 29 Z" fill="#fff"/>
 <path d="M892.5 13 v16" stroke="#ee1d52" stroke-width="0.8" opacity="0.7"/>
 <rect x="924" y="0" width="61" height="50" fill="#3f5058"/>
 <rect x="938" y="10" width="31" height="30" fill="#f6d2b0"/>
 <path d="M946 14 L961 14 L961 19 L951 19 L951 23 L959 23 L959 28 L951 28 L951 37 L946 37 Z" fill="#e8943a"/>
 <path d="M946 14 L961 14 L956 16 L951 16 Z" fill="#f2b060"/>
 <rect x="1001" y="11" width="29" height="28" rx="9" fill="#2d8cff"/>
 <rect x="1006" y="19" width="13" height="11" rx="2" fill="#fff"/><path d="M1020 23 L1026 19 L1026 30 L1020 26 Z" fill="#fff"/>
 <g fill="#76b9ed"><rect x="619" y="47" width="51" height="3"/><rect x="681" y="47" width="51" height="3"/><rect x="924" y="47" width="61" height="3"/><rect x="991" y="47" width="50" height="3"/></g>
 <!-- tray -->
 <path d="M1514 28 L1521 21 L1528 28" fill="none" stroke="#ddd" stroke-width="1.4"/>
 <path d="M1543 30 C1540 30 1539 27 1541 25 C1542 22 1546 22 1547 23 C1549 19 1556 19 1557 23 C1561 23 1562 26 1561 28 C1561 30 1559 30 1558 30 Z" fill="#ddd"/>
 <rect x="1577" y="15" width="8" height="15" rx="4" fill="#eee"/><path d="M1574 25 C1574 33 1588 33 1588 25 M1581 32 V35 M1577 35 H1585" fill="none" stroke="#ddd" stroke-width="1.2"/>
 <path d="M1604 17 L1622 15 L1622 31 L1604 33 Z" fill="none" stroke="#ddd" stroke-width="1.3"/>
 <path d="M1609 24 C1609 20 1616 19 1617 22 M1616 26 C1615 29 1609 29 1609 26" fill="none" stroke="#ddd" stroke-width="1.2"/>
 <circle cx="1618" cy="31" r="4.5" fill="#e81123"/>
 <rect x="1633" y="20" width="17" height="10" fill="none" stroke="#ddd" stroke-width="1.3"/><rect x="1635" y="22" width="6" height="6" fill="#ddd"/><rect x="1651" y="23" width="1.5" height="4" fill="#ddd"/>
 <g fill="none" stroke="#ddd" stroke-width="1.3"><path d="M1666 31 A12 12 0 0 1 1680 18 M1669 32 A8.5 8.5 0 0 1 1680 22 M1672 32 A5 5 0 0 1 1679 26"/></g><circle cx="1679" cy="32" r="1.5" fill="#ddd"/>
 <path d="M1693 22 L1697 22 L1702 17 L1702 34 L1697 29 L1693 29 Z" fill="none" stroke="#ddd" stroke-width="1.2"/>
 <path d="M1705 22 Q1707 25.5 1705 29 M1708 19 Q1712 25.5 1708 32 M1711 16 Q1716 25.5 1711 35" fill="none" stroke="#999" stroke-width="1.1"/>
 <path d="M1869 15 L1891 15 L1891 32 L1883 32 L1880 35 L1877 32 L1869 32 Z" fill="none" stroke="#eee" stroke-width="1.3"/>
 <rect x="1915" y="0" width="1" height="50" fill="#5a6a72"/>
</svg>
<div class="t" style="left:1727px;top:990px;font-size:14px;color:#eee">ESP</div>
<div class="t" style="left:1790px;top:978px;font-size:14.5px;color:#eee">19:17</div>
<div class="t" style="left:1768px;top:1000px;font-size:14.5px;color:#eee">29/09/2021</div>
</body></html>
